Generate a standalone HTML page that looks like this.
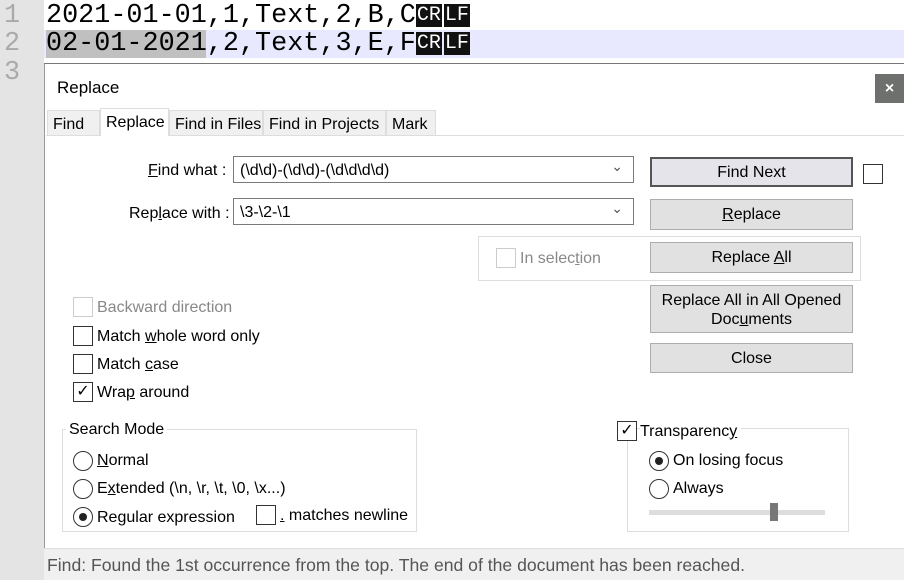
<!DOCTYPE html>
<html><head><meta charset="utf-8"><style>
*{box-sizing:border-box;margin:0;padding:0}
body{width:904px;height:580px;overflow:hidden;background:#fff;position:relative;font-family:"Liberation Sans",sans-serif;font-size:16px;color:#000}
.a{position:absolute;white-space:nowrap}
.t{margin-top:1px}
.mono{font-family:"Liberation Mono",monospace;font-size:26.8px;line-height:28px}
.eol{background:#111;color:#fff;font-size:20px;padding:0 1px;vertical-align:2px}
.cb{position:absolute;width:20px;height:20px;border:1px solid #333;background:#fff}
.btn{position:absolute;background:#e1e1e1;border:1px solid #adadad;text-align:center;line-height:29px}
.inp{position:absolute;border:1px solid #7a7a7a;background:#fff;height:27px;line-height:27px;padding-left:6px}
.inp:after{content:"⌄";position:absolute;right:10px;top:-4px;color:#555;font-size:14px}
.rad{position:absolute;width:20px;height:20px;border:1px solid #333;border-radius:50%;background:#fff}
.dot:after{content:"";position:absolute;left:5px;top:5px;width:8px;height:8px;border-radius:50%;background:#222}
.tab{position:absolute;top:110px;height:25px;background:#f0f0f0;border:1px solid #ddd;border-bottom:none;line-height:28px;padding-left:5px}
u{text-decoration:underline}
</style></head><body>
<div class="a" style="left:0;top:0;width:44px;height:580px;background:#e4e4e4"></div>
<div class="a" style="left:44px;top:30px;width:860px;height:28px;background:#e8e8ff"></div>
<div class="a" style="left:46px;top:30px;width:160px;height:28px;background:#c0c0c0"></div>
<div class="a mono" style="left:4px;top:2px;color:#aaa">1</div>
<div class="a mono" style="left:4px;top:30px;color:#aaa">2</div>
<div class="a mono" style="left:4px;top:59px;color:#aaa">3</div>
<div class="a mono" style="left:46px;top:2px">2021-01-01,1,Text,2,B,C<span class="eol">CR</span><span class="eol" style="margin-left:2px">LF</span></div>
<div class="a mono" style="left:46px;top:30px">02-01-2021,2,Text,3,E,F<span class="eol">CR</span><span class="eol" style="margin-left:2px">LF</span></div>

<div class="a" style="left:44px;top:63px;width:860px;height:485px;background:#fff;border-top:1px solid #777;border-left:1px solid #999"></div>
<div class="a" style="left:57px;top:78px;font-size:17px">Replace</div>
<div class="a" style="left:875px;top:74px;width:29px;height:29px;background:#6d706d;color:#fff;text-align:center;line-height:29px;font-weight:bold;font-size:16px">×</div>
<div class="a" style="left:46px;top:135px;width:858px;height:1px;background:#ddd"></div>
<div class="tab" style="left:47px;width:53px">Find</div>
<div class="tab" style="left:100px;width:69px;top:108px;height:28px;background:#fff;z-index:2;line-height:28px">Replace</div>
<div class="tab" style="left:169px;width:94px">Find in Files</div>
<div class="tab" style="left:263px;width:123px">Find in Projects</div>
<div class="tab" style="left:386px;width:50px">Mark</div>

<div class="a" style="left:148px;top:162px"><u>F</u>ind what :</div>
<div class="inp" style="left:233px;top:156px;width:401px">(\d\d)-(\d\d)-(\d\d\d\d)</div>
<div class="a" style="left:129px;top:205px">Rep<u>l</u>ace with :</div>
<div class="inp" style="left:233px;top:198px;width:401px">\3-\2-\1</div>

<div class="btn" style="left:650px;top:157px;width:203px;height:30px;border:2px solid #555;background:#e4e4ea;line-height:28px">Find Next</div>
<div class="cb" style="left:863px;top:164px"></div>
<div class="btn" style="left:650px;top:199px;width:203px;height:31px"><u>R</u>eplace</div>
<div class="a" style="left:478px;top:236px;width:383px;height:45px;border:1px solid #ddd"></div>
<div class="cb" style="left:496px;top:248px;border-color:#ccc"></div>
<div class="a" style="left:520px;top:250px;color:#888">In selec<u>t</u>ion</div>
<div class="btn" style="left:650px;top:242px;width:203px;height:31px">Replace <u>A</u>ll</div>
<div class="btn" style="left:650px;top:285px;width:203px;height:48px;line-height:19px;padding-top:5px">Replace All in All Opened<br>Doc<u>u</u>ments</div>
<div class="btn" style="left:650px;top:343px;width:203px;height:30px">Close</div>

<div class="cb" style="left:73px;top:297px;border-color:#ccc"></div>
<div class="a" style="left:97px;top:299px;color:#888">Backward direction</div>
<div class="cb" style="left:73px;top:326px"></div>
<div class="a" style="left:97px;top:328px">Match <u>w</u>hole word only</div>
<div class="cb" style="left:73px;top:354px"></div>
<div class="a" style="left:97px;top:356px">Match <u>c</u>ase</div>
<div class="cb" style="left:73px;top:382px;text-align:center;line-height:18px;font-size:16px">✓</div>
<div class="a" style="left:97px;top:384px">Wra<u>p</u> around</div>

<div class="a" style="left:62px;top:429px;width:355px;height:103px;border:1px solid #ddd"></div>
<div class="a" style="left:66px;top:421px;background:#fff;padding:0 3px">Search Mode</div>
<div class="rad" style="left:73px;top:451px"></div>
<div class="a" style="left:97px;top:452px"><u>N</u>ormal</div>
<div class="rad" style="left:73px;top:479px"></div>
<div class="a" style="left:97px;top:480px">E<u>x</u>tended (\n, \r, \t, \0, \x...)</div>
<div class="rad dot" style="left:73px;top:507px"></div>
<div class="a" style="left:97px;top:509px">Re<u>g</u>ular expression</div>
<div class="cb" style="left:256px;top:505px"></div>
<div class="a" style="left:280px;top:507px"><u>.</u> matches newline</div>

<div class="a" style="left:627px;top:428px;width:222px;height:104px;border:1px solid #ddd"></div>
<div class="cb" style="left:617px;top:421px;text-align:center;line-height:18px;font-size:16px">✓</div>
<div class="a" style="left:640px;top:423px;background:#fff;padding-right:4px">Transparenc<u>y</u></div>
<div class="rad dot" style="left:649px;top:451px"></div>
<div class="a" style="left:673px;top:452px">On losing focus</div>
<div class="rad" style="left:649px;top:479px"></div>
<div class="a" style="left:673px;top:480px">Always</div>
<div class="a" style="left:649px;top:510px;width:176px;height:5px;background:#ddd"></div>
<div class="a" style="left:770px;top:503px;width:8px;height:18px;background:#777"></div>

<div class="a" style="left:44px;top:548px;width:860px;height:32px;background:#f0f0f0;border-top:1px solid #ddd"></div>
<div class="a" style="left:47px;top:555px;color:#555;font-size:17.6px">Find: Found the 1st occurrence from the top. The end of the document has been reached.</div>
</body></html>
